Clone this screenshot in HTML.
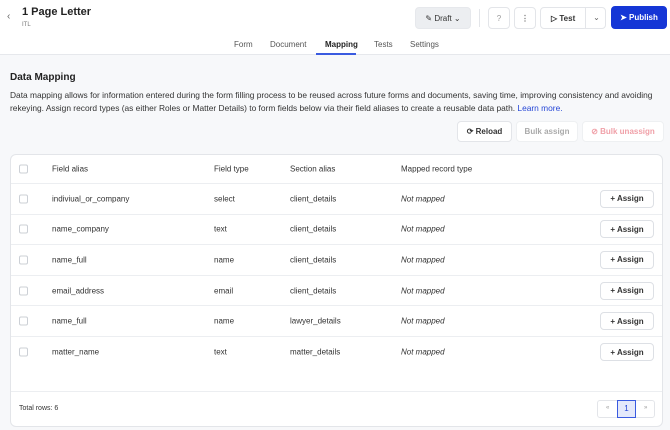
<!DOCTYPE html><html><head><style>
*{box-sizing:border-box;margin:0;padding:0}
body{width:670px;height:430px;overflow:hidden;background:#f7f8fa;font-family:"Liberation Sans",sans-serif;color:#222;position:relative;font-size:8px}
.hdr{position:absolute;left:0;top:0;width:670px;height:55px;background:#fff;border-bottom:1px solid #e6e8ec}
.a{position:absolute}
.btn{position:absolute;border:1px solid #e3e5e9;border-radius:4px;background:#fff;display:flex;align-items:center;justify-content:center;font-size:8px;font-weight:bold;color:#333}
.card{position:absolute;left:10px;top:154px;width:653px;height:273px;background:#fff;border:1px solid #e3e5e9;border-radius:6px}
.row{position:absolute;left:0;width:651px;height:30.6px;border-bottom:1px solid #eceef1}
.row span{position:absolute;top:50%;transform:translateY(-50%);font-size:8px;color:#333}
.cb{position:absolute;left:8px;top:50%;transform:translateY(-50%);width:9px;height:9px;border:1px solid #ccd0d6;border-radius:2px}
.asg{position:absolute;right:8px;top:50%;transform:translateY(-50%);width:54px;height:18px;border:1px solid #dde0e5;border-radius:4px;font-size:8px;font-weight:bold;display:flex;align-items:center;justify-content:center;color:#333}
</style></head><body>
<div class="hdr">
<div class="a" style="left:7px;top:11px;font-size:10px;color:#666">‹</div>
<div class="a" style="left:22px;top:6px;font-size:11px;font-weight:bold">1 Page Letter</div>
<div class="a" style="left:22px;top:22px;font-size:6px;color:#777">ITL</div>
<div class="btn" style="left:415px;top:7px;width:56px;height:22px;background:#eceef1;border-color:#e6e8ec;font-weight:normal">✎ Draft ⌄</div>
<div class="a" style="left:479px;top:9px;width:1px;height:18px;background:#e3e5e9"></div>
<div class="btn" style="left:488px;top:7px;width:22px;height:22px;color:#999;font-weight:normal">?</div>
<div class="btn" style="left:514px;top:7px;width:22px;height:22px;color:#777">⋮</div>
<div class="btn" style="left:540px;top:7px;width:66px;height:22px;justify-content:flex-start;padding-left:10px">▷ Test<span style="position:absolute;left:44px;top:0;height:20px;border-left:1px solid #e3e5e9;width:22px;text-align:center;line-height:20px;color:#666;font-weight:normal">⌄</span></div>
<div class="btn" style="left:611px;top:6px;width:56px;height:23px;background:#1536d6;border-color:#1536d6;color:#fff">➤ Publish</div>
<div class="a" style="left:234px;top:40px;font-size:8px;color:#555">Form</div>
<div class="a" style="left:270px;top:40px;font-size:8px;color:#555">Document</div>
<div class="a" style="left:325px;top:40px;font-size:8px;color:#222;font-weight:bold">Mapping</div>
<div class="a" style="left:316px;top:53px;width:40px;height:2px;background:#3a5be0"></div>
<div class="a" style="left:374px;top:40px;font-size:8px;color:#555">Tests</div>
<div class="a" style="left:410px;top:40px;font-size:8px;color:#555">Settings</div>
</div>
<div class="a" style="left:10px;top:72px;font-size:10px;font-weight:bold">Data Mapping</div>
<div class="a" style="left:10px;top:89px;width:648px;font-size:8.4px;line-height:13px;color:#333">Data mapping allows for information entered during the form filling process to be reused across future forms and documents, saving time, improving consistency and avoiding rekeying. Assign record types (as either Roles or Matter Details) to form fields below via their field aliases to create a reusable data path. <span style="color:#2546d6">Learn more.</span></div>
<div class="btn" style="left:457px;top:121px;width:55px;height:21px">⟳ Reload</div>
<div class="btn" style="left:516px;top:121px;width:62px;height:21px;color:#aaa;border-color:#eef0f2">Bulk assign</div>
<div class="btn" style="left:582px;top:121px;width:82px;height:21px;color:#f0a0a8;border-color:#eef0f2">⊘ Bulk unassign</div>
<div class="card">
<div class="row" style="top:0;height:29px"><div class="cb"></div><span style="left:41px">Field alias</span><span style="left:203px">Field type</span><span style="left:279px">Section alias</span><span style="left:390px">Mapped record type</span></div>
<div class="row" style="top:29px"><div class="cb"></div><span style="left:41px">indiviual_or_company</span><span style="left:203px">select</span><span style="left:279px">client_details</span><span style="left:390px;font-style:italic">Not mapped</span><div class="asg">+ Assign</div></div>
<div class="row" style="top:59.6px"><div class="cb"></div><span style="left:41px">name_company</span><span style="left:203px">text</span><span style="left:279px">client_details</span><span style="left:390px;font-style:italic">Not mapped</span><div class="asg">+ Assign</div></div>
<div class="row" style="top:90.2px"><div class="cb"></div><span style="left:41px">name_full</span><span style="left:203px">name</span><span style="left:279px">client_details</span><span style="left:390px;font-style:italic">Not mapped</span><div class="asg">+ Assign</div></div>
<div class="row" style="top:120.8px"><div class="cb"></div><span style="left:41px">email_address</span><span style="left:203px">email</span><span style="left:279px">client_details</span><span style="left:390px;font-style:italic">Not mapped</span><div class="asg">+ Assign</div></div>
<div class="row" style="top:151.4px"><div class="cb"></div><span style="left:41px">name_full</span><span style="left:203px">name</span><span style="left:279px">lawyer_details</span><span style="left:390px;font-style:italic">Not mapped</span><div class="asg">+ Assign</div></div>
<div class="row" style="top:182px;border-bottom:none"><div class="cb"></div><span style="left:41px">matter_name</span><span style="left:203px">text</span><span style="left:279px">matter_details</span><span style="left:390px;font-style:italic">Not mapped</span><div class="asg">+ Assign</div></div>
<div class="a" style="left:0;top:236px;width:651px;height:1px;background:#eceef1"></div>
<div class="a" style="left:8px;top:250px;font-size:7px;color:#333">Total rows: 6</div>
<div class="a" style="left:586px;top:245px;width:58px;height:18px;border:1px solid #e3e5e9;border-radius:3px;font-size:6px;color:#999"><span style="position:absolute;left:8px;top:4px">«</span><span style="position:absolute;left:19px;top:-1px;width:19px;height:18px;border:1px solid #3a5be0;background:#e4e9fb;color:#2546d6;font-size:8px;text-align:center;line-height:16px">1</span><span style="position:absolute;left:46px;top:4px">»</span></div>
</div>
</body></html>
